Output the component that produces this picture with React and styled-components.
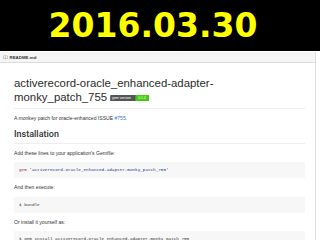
import styled, { createGlobalStyle } from "styled-components";

const GlobalStyle = createGlobalStyle`
  html, body {
    margin: 0;
    padding: 0;
    background: #fff;
    overflow: hidden;
  }
  body {
    width: 320px;
    height: 240px;
    font-family: "Liberation Sans", Arial, sans-serif;
  }
`;

function BookIcon() {
  return (
    <svg width="5" height="5" viewBox="0 0 16 16">
      <path
        fill="#666"
        d="M2 2h5c.6 0 1 .4 1 1 0-.6.4-1 1-1h5v11H9.5c-.8 0-1.5.5-1.5 1 0-.5-.7-1-1.5-1H2V2zm1 1v9h3.5c.6 0 1 .2 1 .2V3.3S7 3 6.5 3H3zm10 0H9.5c-.5 0-1 .3-1 .3v8.9s.4-.2 1-.2H13V3z"
      />
    </svg>
  );
}

function GemBadge() {
  return (
    <svg width="39" height="6.3" viewBox="0 0 123 20">
      <rect width="123" height="20" rx="3" fill="#555" />
      <rect x="81" width="42" height="20" rx="3" fill="#4c1" />
      <rect x="81" width="4" height="20" fill="#4c1" />
      <g fill="#fff" fontFamily="Liberation Sans, sans-serif" fontSize="11">
        <text x="6" y="14">gem version</text>
        <text x="89" y="14">0.1.0</text>
      </g>
    </svg>
  );
}

function App() {
  return (
    <>
      <GlobalStyle />
      <Banner>
        <DateText>2016.03.30</DateText>
      </Banner>
      <ReadmeBox>
        <FileHeader>
          <BookIcon />
          <FileName>README.md</FileName>
        </FileHeader>
        <MarkdownBody>
          <Title>
            activerecord-oracle_enhanced-adapter-
            <br />
            monky_patch_755 <GemBadge />
          </Title>
          <Para>
            A monkey patch for oracle-enhanced ISSUE <Link>#755</Link>.
          </Para>
          <SubTitle>Installation</SubTitle>
          <Para>Add these lines to your application's Gemfile:</Para>
          <CodeBlock>
            <Keyword>gem</Keyword>{" "}
            <Str>'activerecord-oracle_enhanced-adapter-monky_patch_755'</Str>
          </CodeBlock>
          <Para>And then execute:</Para>
          <CodeBlock>$ bundle</CodeBlock>
          <Para>Or install it yourself as:</Para>
          <CodeBlock>
            $ gem install activerecord-oracle_enhanced-adapter-monky_patch_755
          </CodeBlock>
        </MarkdownBody>
      </ReadmeBox>
    </>
  );
}

export default App;

const Banner = styled.header`
  height: 51px;
  background: #000;
  display: flex;
  justify-content: center;
  align-items: center;
  padding-right: 14px;
`;

const DateText = styled.h1`
  margin: 0;
  font-family: "DejaVu Sans", sans-serif;
  font-weight: 700;
  font-size: 33px;
  line-height: 1;
  color: #ffff00;
  padding-bottom: 1px;
`;

const ReadmeBox = styled.section`
  width: 316px;
  box-sizing: border-box;
  border-right: 1px solid #ddd;
  height: 189px;
`;

const FileHeader = styled.div`
  margin-top: 1px;
  height: 10px;
  background: #f5f5f5;
  border-bottom: 1px solid #ddd;
  display: flex;
  align-items: center;
  gap: 1.5px;
  padding-left: 3px;
`;

const FileName = styled.span`
  font-size: 4.4px;
  font-weight: 700;
  color: #333;
`;

const MarkdownBody = styled.article`
  padding: 14px 10px 0 14px;
  color: #333;
  font-size: 5.07px;
  line-height: 1.6;
`;

const Title = styled.h2`
  margin: 0 0 5px;
  font-size: 11.4px;
  line-height: 1.2;
  font-weight: 400;
  color: #2a2a2a;
  padding-bottom: 3.4px;
  border-bottom: 1px solid #eee;

  & svg {
    vertical-align: -0.5px;
  }
`;

const SubTitle = styled.h3`
  margin: 7.6px 0 5px;
  font-family: Roboto, "Liberation Sans", sans-serif;
  font-size: 9px;
  line-height: 1.225;
  font-weight: 500;
  padding-bottom: 2.7px;
  border-bottom: 1px solid #eee;
`;

const Para = styled.p`
  margin: 0 0 5px;
`;

const Link = styled.a`
  color: #4078c0;
`;

const CodeBlock = styled.pre`
  margin: 0 0 5px;
  padding: 5px;
  background: #f7f7f7;
  border-radius: 1px;
  font-family: "Liberation Mono", monospace;
  font-size: 4.3px;
  line-height: 1.45;
  color: #333;
  overflow: hidden;
`;

const Keyword = styled.span`
  color: #a71d5d;
`;

const Str = styled.span`
  color: #183691;
`;
